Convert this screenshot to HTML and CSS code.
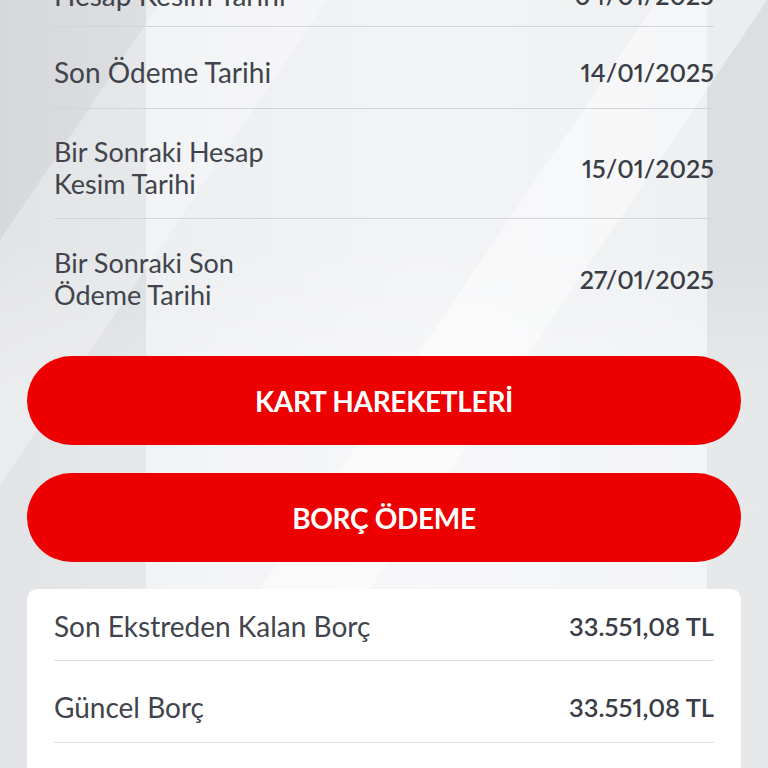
FILE: index.html
```html
<!DOCTYPE html>
<html lang="tr">

<head>
    <meta charset="utf-8">
    <title>Kart Detayı</title>
    <link rel="stylesheet" href="styles.css">
</head>

<body>
    <div class="screen">
        <!-- ekstre tarihleri -->
        <div class="date-list">
            <div class="date-row first">
                <span class="row-label">Hesap Kesim Tarihi</span>
                <span class="row-value">04/01/2025</span>
            </div>
            <div class="date-row">
                <span class="row-label">Son Ödeme Tarihi</span>
                <span class="row-value">14/01/2025</span>
            </div>
            <div class="date-row tall">
                <span class="row-label two-line">Bir Sonraki Hesap<br>Kesim Tarihi</span>
                <span class="row-value">15/01/2025</span>
            </div>
            <div class="date-row tall last">
                <span class="row-label two-line">Bir Sonraki Son<br>Ödeme Tarihi</span>
                <span class="row-value">27/01/2025</span>
            </div>
        </div>

        <div class="actions">
            <button class="red-btn" type="button">KART HAREKETLERİ</button>
            <button class="red-btn" type="button">BORÇ ÖDEME</button>
        </div>

        <!-- borc bilgileri -->
        <div class="debt-card">
            <div class="debt-row first">
                <span class="row-label">Son Ekstreden Kalan Borç</span>
                <span class="row-value">33.551,08 TL</span>
            </div>
            <div class="debt-row">
                <span class="row-label">Güncel Borç</span>
                <span class="row-value">33.551,08 TL</span>
            </div>
        </div>
    </div>
</body>

</html>
```

FILE: styles.css
```css
html,
body {
    margin: 0;
    padding: 0;
    height: 100%;
    overflow: hidden;
}

body {
    font-family: Lato, "Open Sans", sans-serif;
    color: #3a3d45;
    background-color: #e6e8ea;
}

.screen {
    margin-top: -45px;
    min-height: 900px;
    background:
        linear-gradient(124deg, transparent 0 50%, rgba(255, 255, 255, 0.45) 50% 58%, transparent 58%),
        linear-gradient(124deg, transparent 0 14%, rgba(255, 255, 255, 0.3) 14% 26%, transparent 26%),
        linear-gradient(180deg, transparent 0 32%, rgba(255, 255, 255, 0.3) 48%),
        linear-gradient(90deg, #d6d8db 0, #dcdee1 19%, #eceef0 19%, #f3f4f6 55%, #eef0f2 92%, #dcdee1 92%);
}

.date-list {
    padding: 0 54px;
}

.date-row {
    display: flex;
    align-items: center;
    justify-content: space-between;
    box-sizing: border-box;
    height: 82px;
    padding-top: 9px;
    border-bottom: 1px solid #d2d4d7;
}

.date-row.first {
    height: 72px;
}

.date-row.tall {
    height: 110px;
}

.date-row.last {
    border-bottom: none;
}

.row-label {
    font-size: 28px;
    line-height: 34px;
    font-weight: 400;
    color: #41444c;
}

.row-label.two-line {
    font-size: 27px;
    line-height: 32px;
}

.row-value {
    font-size: 25px;
    font-weight: 600;
    font-feature-settings: "pnum";
}

.actions {
    display: flex;
    flex-direction: column;
    gap: 28px;
    padding: 27px;
}

.red-btn {
    height: 89px;
    border: none;
    border-radius: 45px;
    background-color: #ee0000;
    color: #ffffff;
    font-family: Lato, sans-serif;
    font-size: 28px;
    font-weight: 700;
    letter-spacing: -0.3px;
}

.debt-card {
    margin: 0 27px;
    padding: 0 27px 60px;
    background-color: #ffffff;
    border-radius: 10px;
}

.debt-row {
    display: flex;
    align-items: center;
    justify-content: space-between;
    box-sizing: border-box;
    height: 82px;
    padding-top: 10px;
    border-bottom: 1px solid #dedfe1;
}

.debt-row.first {
    height: 72px;
    padding-top: 2px;
}

.debt-row .row-value {
    font-size: 25.5px;
}
```
